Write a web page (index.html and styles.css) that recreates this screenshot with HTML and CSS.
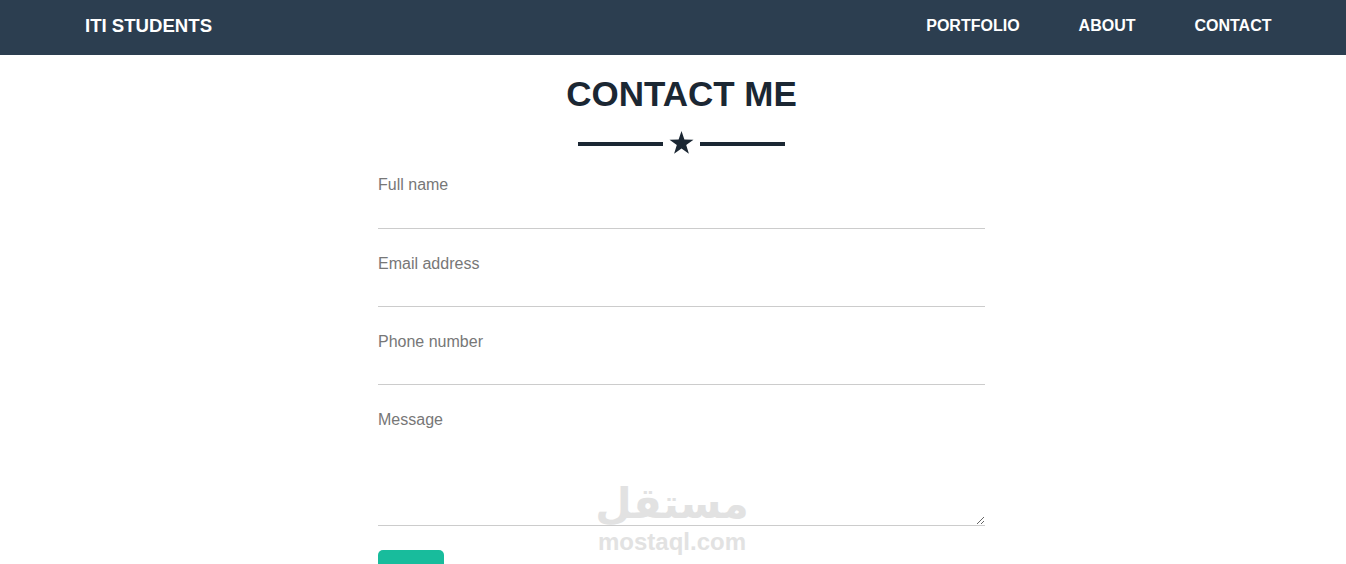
FILE: index.html
```html
<!DOCTYPE html>
<html lang="en">
<head>
    <meta charset="UTF-8">
    <meta name="viewport" content="width=device-width, initial-scale=1.0">
    <title>ITI Students - Contact</title>
    <link rel="stylesheet" href="styles.css">
</head>
<body>
    <nav class="navbar">
        <a href="#" class="brand">ITI STUDENTS</a>
        <ul class="nav-links">
            <li><a href="#portfolio">PORTFOLIO</a></li>
            <li><a href="#about">ABOUT</a></li>
            <li><a href="#contact">CONTACT</a></li>
        </ul>
    </nav>

    <section class="contact" id="contact">
        <h2 class="section-title">CONTACT ME</h2>
        <div class="divider">
            <span class="divider-line"></span>
            <svg class="divider-star" width="25" height="24" viewBox="0 0 25 24">
                <polygon points="12.5,0 15.4,8.6 24.5,8.7 17.2,14.1 19.9,22.8 12.5,17.6 5.1,22.8 7.8,14.1 0.5,8.7 9.6,8.6" fill="#1b2733"/>
            </svg>
            <span class="divider-line"></span>
        </div>

        <form class="contact-form">
            <div class="form-group">
                <label for="name">Full name</label>
                <input type="text" id="name">
            </div>
            <div class="form-group">
                <label for="email">Email address</label>
                <input type="email" id="email">
            </div>
            <div class="form-group">
                <label for="phone">Phone number</label>
                <input type="tel" id="phone">
            </div>
            <div class="form-group">
                <label for="message">Message</label>
                <textarea id="message"></textarea>
            </div>
            <button type="button" class="send-btn">Send</button>
        </form>
    </section>

    <div class="watermark">
        <div class="watermark-ar">مستقل</div>
        <div class="watermark-en">mostaql.com</div>
    </div>
</body>
</html>
```

FILE: styles.css
```css
* {
    margin: 0;
    padding: 0;
    box-sizing: border-box;
}

html, body {
    height: 564px;
    overflow: hidden;
}

body {
    font-family: "Liberation Sans", Arial, sans-serif;
    background: #ffffff;
    color: #1b2733;
}

.navbar {
    background: #2c3e50;
    height: 55px;
    display: flex;
    align-items: center;
    justify-content: space-between;
    padding: 0 45px 0 85px;
}

.brand {
    color: #ffffff;
    font-weight: 700;
    font-size: 18.6px;
    text-decoration: none;
    margin-top: -4px;
}

.nav-links {
    list-style: none;
    display: flex;
}

.nav-links a {
    display: block;
    padding: 0 29.5px;
    color: #ffffff;
    font-weight: 700;
    font-size: 16px;
    text-decoration: none;
    margin-top: -3px;
}

.contact {
    width: 607px;
    margin-left: calc(50% - 295px);
    padding-top: 20px;
}

.section-title {
    text-align: center;
    font-size: 35px;
    line-height: 38px;
    font-weight: 700;
    color: #1b2733;
}

.divider {
    display: flex;
    align-items: center;
    justify-content: center;
    gap: 6px;
    margin-top: 18px;
    height: 24px;
}

.divider-line {
    width: 85px;
    height: 4px;
    background: #1b2733;
    margin-top: 1px;
}

.contact-form {
    margin-top: 20px;
}

.form-group {
    margin-bottom: 24px;
}

label {
    display: block;
    padding-top: 1px;
    color: #777777;
    font-size: 16px;
    line-height: 20px;
}

input, textarea {
    display: block;
    width: 100%;
    height: 33px;
    border: none;
    border-bottom: 1px solid #cccccc;
    font-family: inherit;
    font-size: 16px;
    outline: none;
    background: transparent;
}

.form-group:first-child label {
    padding-top: 0;
}

.form-group:first-child input {
    height: 34px;
}

textarea {
    height: 96px;
    resize: vertical;
}

.send-btn {
    display: block;
    width: 66px;
    padding: 22px 0;
    background: #18bc9c;
    color: #ffffff;
    border: none;
    border-radius: 5px;
    font-family: inherit;
    font-size: 16px;
    cursor: pointer;
    margin-top: 3px;
}

.watermark {
    position: absolute;
    left: 592px;
    top: 478px;
    width: 160px;
    text-align: center;
    color: #e2e2e2;
    pointer-events: none;
}

.watermark-ar {
    font-family: "DejaVu Sans", sans-serif;
    font-weight: 700;
    font-size: 42px;
    line-height: 52px;
}

.watermark-en {
    font-family: "Liberation Sans", Arial, sans-serif;
    font-weight: 700;
    font-size: 24px;
    line-height: 24px;
}
```
